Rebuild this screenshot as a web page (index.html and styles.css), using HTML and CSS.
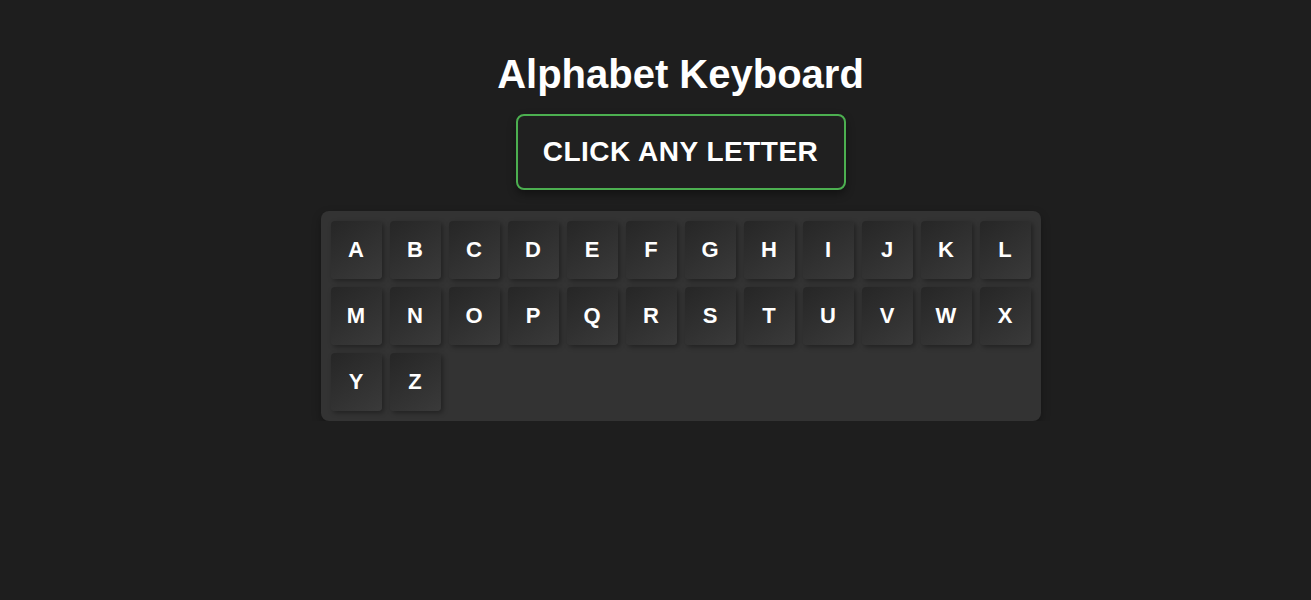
FILE: index.html
```html
<!DOCTYPE html>
<html lang="en">
<head>
<meta charset="UTF-8">
<title>Alphabet Keyboard</title>
<link rel="stylesheet" href="styles.css">
</head>
<body>
<main class="app">
  <h1 class="title">Alphabet Keyboard</h1>
  <div class="display">CLICK ANY LETTER</div>
  <div class="keyboard">
    <button class="key">A</button><button class="key">B</button><button class="key">C</button><button class="key">D</button><button class="key">E</button><button class="key">F</button><button class="key">G</button><button class="key">H</button><button class="key">I</button><button class="key">J</button><button class="key">K</button><button class="key">L</button>
    <button class="key">M</button><button class="key">N</button><button class="key">O</button><button class="key">P</button><button class="key">Q</button><button class="key">R</button><button class="key">S</button><button class="key">T</button><button class="key">U</button><button class="key">V</button><button class="key">W</button><button class="key">X</button>
    <button class="key">Y</button><button class="key">Z</button>
  </div>
</main>
</body>
</html>
```

FILE: styles.css
```css
html, body {
  margin: 0;
  padding: 0;
  background: #1e1e1e;
  font-family: "Liberation Sans", Arial, sans-serif;
  color: #ffffff;
}
body {
  padding-left: 50px;
}
.app {
  display: flex;
  flex-direction: column;
  align-items: center;
  padding-top: 51px;
}
.title {
  margin: 0;
  font-size: 40px;
  font-weight: bold;
  line-height: 46px;
}
.display {
  margin-top: 17px;
  width: 330px;
  height: 76px;
  box-sizing: border-box;
  border: 2px solid #4caf50;
  border-radius: 8px;
  background: #202020;
  font-size: 28px;
  font-weight: bold;
  letter-spacing: 0.5px;
  display: flex;
  align-items: center;
  justify-content: center;
  box-shadow: 0 4px 8px rgba(0,0,0,0.4);
}
.keyboard {
  margin-top: 21px;
  width: 720px;
  box-sizing: border-box;
  padding: 10px;
  background: #333333;
  border-radius: 8px;
  display: grid;
  grid-template-columns: repeat(12, 51px);
  gap: 8px;
  box-shadow: 0 4px 10px rgba(0,0,0,0.3);
}
.key {
  height: 58px;
  border: none;
  border-radius: 4px;
  background: linear-gradient(145deg, #262626, #3a3a3a);
  color: #ffffff;
  font-family: "Liberation Sans", Arial, sans-serif;
  font-size: 22px;
  font-weight: bold;
  padding: 0;
  box-shadow: 2px 2px 5px rgba(0,0,0,0.35);
}
```
